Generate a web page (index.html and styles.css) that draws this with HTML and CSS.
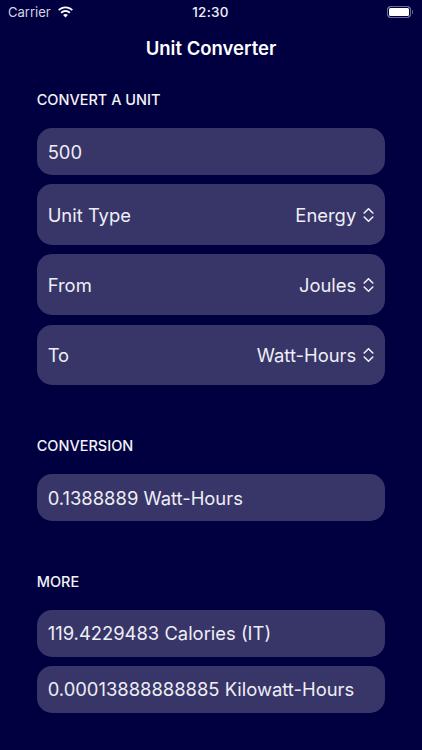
FILE: index.html
```html
<!DOCTYPE html>
<html lang="en">
<head>
<meta charset="utf-8">
<title>Unit Converter</title>
<link rel="stylesheet" href="styles.css">
</head>
<body>
<div class="status">
  <div class="status-left">
    <span class="carrier">Carrier</span>
    <svg class="wifi" width="17" height="12" viewBox="0 0 17 12"><path fill="#fff" d="M8.500 2.300c2.400 0 4.600.9 6.200 2.500l1.200-1.300C13.900 1.500 11.300.4 8.500.4S3.100 1.500 1.100 3.500l1.200 1.300C3.900 3.200 6.100 2.300 8.500 2.300zM8.500 6c1.400 0 2.700.5 3.700 1.500l1.300-1.300C12.100 4.900 10.400 4.100 8.500 4.100s-3.600.8-5 2.100l1.300 1.300C5.800 6.500 7.100 6 8.500 6zM8.500 11.600l2.400-2.500c-.6-.6-1.500-1-2.400-1s-1.800.4-2.400 1z"/></svg>
  </div>
  <span class="time">12:30</span>
  <div class="battery"><span class="battery-fill"></span><span class="battery-cap"></span></div>
</div>
<h1 class="title">Unit Converter</h1>
<main class="content">
  <section class="section first">
    <h2 class="heading">CONVERT A UNIT</h2>
    <div class="rows">
      <div class="row short">500</div>
      <div class="row tall"><span>Unit Type</span><span class="picker">Energy <svg class="chev" width="11" height="16" viewBox="0 0 11 16"><path d="M1.200 6 5.500 1.700 9.800 6M1.200 10 5.500 14.300 9.800 10"/></svg></span></div>
      <div class="row tall"><span>From</span><span class="picker">Joules <svg class="chev" width="11" height="16" viewBox="0 0 11 16"><path d="M1.200 6 5.500 1.700 9.800 6M1.200 10 5.500 14.300 9.800 10"/></svg></span></div>
      <div class="row tall"><span>To</span><span class="picker">Watt-Hours <svg class="chev" width="11" height="16" viewBox="0 0 11 16"><path d="M1.200 6 5.500 1.700 9.800 6M1.200 10 5.500 14.300 9.800 10"/></svg></span></div>
    </div>
  </section>
  <section class="section">
    <h2 class="heading">CONVERSION</h2>
    <div class="rows">
      <div class="row short">0.1388889 Watt-Hours</div>
    </div>
  </section>
  <section class="section">
    <h2 class="heading">MORE</h2>
    <div class="rows">
      <div class="row short">119.4229483 Calories (IT)</div>
      <div class="row short">0.00013888888885 Kilowatt-Hours</div>
    </div>
  </section>
</main>
</body>
</html>
```
FILE: styles.css
```css
* { box-sizing: border-box; }
html, body { margin: 0; padding: 0; }
body {
  width: 422px;
  height: 750px;
  overflow: hidden;
  background: #000040;
  color: #fff;
  font-family: Inter, "Liberation Sans", sans-serif;
}
.status {
  height: 24px;
  display: grid;
  grid-template-columns: 1fr auto 1fr;
  align-items: center;
  padding: 0 9px 0 8px;
}
.status-left { display: flex; align-items: center; gap: 6px; }
.carrier { font-size: 13px; color: #d5d5e2; }
.wifi { display: block; }
.time { font-size: 13.500px; font-weight: 500; letter-spacing: .3px; color: #f0f0f5; }
.battery { justify-self: end; display: flex; align-items: center; margin-top: -1px; }
.battery-fill {
  width: 24px;
  height: 12px;
  border: 1px solid #6b6b96;
  border-radius: 3.500px;
  background: #fff;
  box-shadow: inset 0 0 0 1px #000040;
}
.battery-cap { width: 1.500px; height: 4px; background: #6b6b96; border-radius: 0 1px 1px 0; margin-left: 1px; }
.title {
  margin: 12.500px 0 0;
  font-size: 18.500px;
  line-height: 22px;
  font-weight: 600;
  text-align: center;
}
.content { padding: 0 36.700px; }
.section { margin-top: 52.900px; }
.section.first { margin-top: 33.800px; }
.heading {
  margin: 0 0 20px;
  font-size: 14.500px;
  line-height: 16px;
  font-weight: 500;
  color: #f2f2f7;
}
.rows { display: flex; flex-direction: column; gap: 9.300px; }
.row {
  background: #383568;
  border-radius: 15px;
  padding: 0 11.600px 0 11px;
  font-size: 18.400px;
  color: #eeeef5;
  display: flex;
  align-items: center;
  justify-content: space-between;
}
.row.short { height: 46.800px; }
.row.tall { height: 60.800px; }
.picker { display: flex; align-items: center; gap: 6.500px; }
.chev { display: block; fill: none; stroke: #eeeef5; stroke-width: 1.600; stroke-linecap: round; stroke-linejoin: round; }
```
